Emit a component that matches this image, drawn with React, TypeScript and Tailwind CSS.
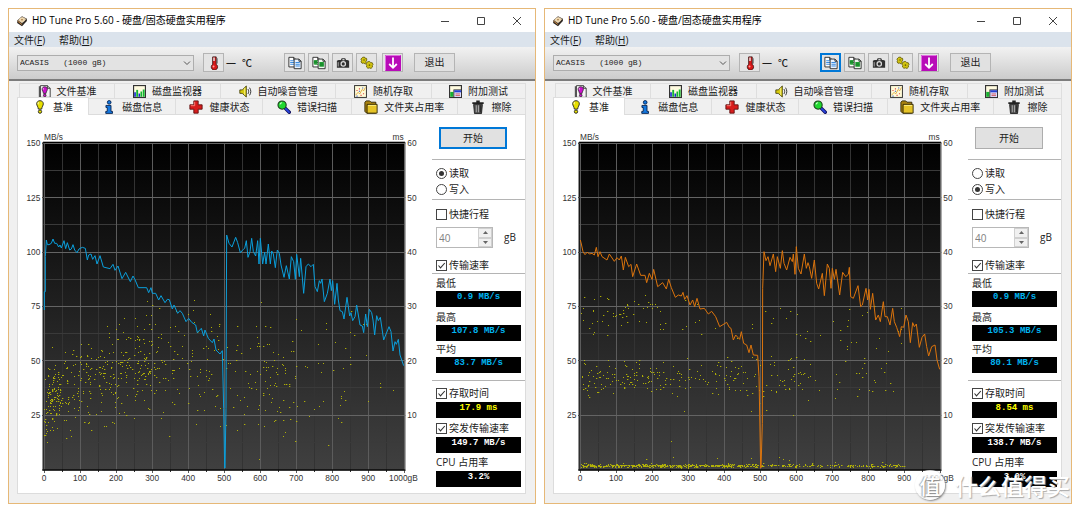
import { useId, type ReactNode } from "react";
import clsx from "clsx";

/* ---------- chart data (three units per pixel) ---------- */

const PLOT = { left: 102, right: 1183, top: 70, bottom: 1048 };

const READ_TRACE =
  "103,570 103,515 106,515 106,410 109,360 112,374 117,374 124,370 129,357 134,370 140,370 146,381 150,375 154,384 162,362 167,386 172,368 179,390 184,387 189,374 194,390 201,398 207,387 217,382 226,385 232,420 236,405 243,402 248,418 255,407 261,432 270,407 280,441 300,446 309,433 315,451 324,438 336,476 347,457 361,485 369,468 375,479 385,503 410,503 416,518 423,503 427,520 437,520 446,540 453,527 465,548 472,538 478,539 487,567 492,555 503,580 510,572 517,580 528,605 536,595 545,607 557,615 562,638 574,625 581,648 585,630 595,655 607,668 612,657 618,690 630,702 637,692 641,865 644,1044 645,1044 648,865 649,570 650,345 657,370 666,381 677,352 683,368 691,398 700,388 704,385 709,362 714,412 720,395 725,355 730,395 737,408 743,362 747,432 751,355 758,432 764,396 768,432 775,372 781,432 785,393 790,402 796,443 802,390 808,400 813,435 822,472 829,437 838,477 844,410 851,425 856,478 860,403 868,470 872,415 881,520 888,440 895,432 903,440 910,433 915,500 922,515 928,482 932,490 936,477 943,545 952,520 960,477 964,512 968,482 974,553 981,490 985,540 990,572 997,575 1002,597 1011,532 1019,588 1023,578 1028,602 1035,590 1040,555 1050,615 1057,618 1061,638 1067,582 1072,620 1078,568 1085,578 1089,600 1094,645 1100,587 1105,602 1111,592 1121,660 1137,620 1143,635 1149,693 1155,665 1159,673 1165,658 1170,705 1181,737";

const WRITE_TRACE =
  "103,360 106,372 111,395 117,404 124,396 130,402 138,400 145,405 151,382 156,410 162,395 168,410 183,420 190,402 205,424 213,413 220,420 226,408 232,450 238,412 248,440 255,433 260,470 272,432 284,466 297,466 302,488 310,460 318,478 323,448 335,500 350,488 361,507 368,478 376,503 388,532 397,525 406,528 411,517 416,538 423,527 432,555 440,540 446,560 453,535 462,567 475,565 487,582 497,574 509,590 521,620 534,612 542,607 550,622 555,625 562,660 569,645 581,658 586,635 593,670 602,675 609,698 615,675 622,705 635,706 639,770 644,1044 645,1044 649,910 650,505 654,395 660,422 666,410 672,437 682,402 689,455 694,410 703,445 709,392 714,430 722,450 732,412 739,425 742,402 747,463 751,380 757,445 765,462 775,402 781,445 786,428 790,440 797,475 805,420 812,490 818,507 829,460 835,527 844,432 850,445 855,505 859,445 865,478 870,448 881,525 890,457 899,470 907,463 910,442 914,530 922,535 936,497 944,560 949,555 960,505 965,540 969,508 973,568 980,520 989,600 997,585 1003,605 1012,545 1017,590 1024,590 1032,615 1040,565 1045,605 1052,622 1061,650 1066,620 1073,622 1080,585 1087,605 1093,668 1100,608 1105,620 1111,612 1120,682 1128,652 1136,642 1142,680 1148,708 1157,680 1167,675 1173,720 1181,748";

type Dot = [number, number];

function makeRandom(seed: number) {
  let s = seed;
  return () => {
    s = (s * 1664525 + 1013904223) % 4294967296;
    return s / 4294967296;
  };
}

function makeDots(seed: number, bands: { n: number; from: number; to: number; ms: (gb: number) => number; sd: number }[]): Dot[] {
  const rnd = makeRandom(seed);
  const dots: Dot[] = [];
  for (const b of bands) {
    for (let i = 0; i < b.n; i++) {
      const gb = b.from + rnd() * (b.to - b.from);
      const g = rnd() + rnd() + rnd() - 1.5;
      const ms = Math.max(0.3, b.ms(gb) + g * 2 * b.sd);
      dots.push([PLOT.left + gb * 1.081, PLOT.bottom - ms * 16.3]);
    }
  }
  return dots;
}

const READ_DOTS = makeDots(7, [
  { n: 75, from: 0, to: 50, ms: (g) => 10 + g / 12, sd: 3.2 },
  { n: 290, from: 10, to: 300, ms: (g) => 13.5 + g / 38, sd: 4 },
  { n: 125, from: 250, to: 500, ms: () => 19.5, sd: 5.5 },
  { n: 90, from: 500, to: 700, ms: () => 17, sd: 5.5 },
  { n: 50, from: 600, to: 900, ms: () => 18, sd: 6 },
  { n: 4, from: 850, to: 1000, ms: () => 14, sd: 5 },
]);

const WRITE_DOTS = makeDots(23, [
  { n: 130, from: 0, to: 300, ms: () => 17, sd: 1.6 },
  { n: 95, from: 300, to: 620, ms: () => 16.8, sd: 1.8 },
  { n: 28, from: 600, to: 870, ms: () => 16.5, sd: 2 },
  { n: 55, from: 0, to: 250, ms: () => 28.5, sd: 1.8 },
  { n: 50, from: 250, to: 900, ms: () => 26.5, sd: 3.5 },
  { n: 6, from: 150, to: 620, ms: () => 9.5, sd: 2 },
  { n: 420, from: 0, to: 500, ms: () => 0.7, sd: 0.15 },
  { n: 150, from: 500, to: 900, ms: () => 0.7, sd: 0.12 },
  { n: 26, from: 0, to: 850, ms: () => 1.4, sd: 0.6 },
]);

const snap = (v: number) => Math.floor(v / 3) * 3 + 1.5;

function Chart({ trace, dots, color }: { trace: string; dots: Dot[]; color: string }) {
  const fill = useId();
  const xs = Array.from({ length: 21 }, (_, i) => i);
  const ys = Array.from({ length: 13 }, (_, i) => i);
  return (
    <svg viewBox="24 -15 1236 1134" className="block h-auto w-full" role="img">
      <defs>
        <linearGradient id={fill} x1="0" y1="0" x2="0" y2="1">
          <stop offset="0" stopColor="#000" />
          <stop offset="1" stopColor="#404040" />
        </linearGradient>
      </defs>
      <rect x="99" y="63" width="1086" height="3" fill="#b5b5b5" />
      <rect x="99" y="66" width="1086" height="985" fill={`url(#${fill})`} />
      <g strokeWidth="3">
        {xs.filter((i) => i % 2).map((i) => (
          <path key={i} d={`M${snap(PLOT.left + i * 54.05)} 72V1056`} stroke="#333" />
        ))}
        {ys.filter((i) => i % 2).map((i) => (
          <path key={i} d={`M99 ${snap(PLOT.top + i * 81.5)}H1185`} stroke="#3a3a3a" />
        ))}
        {xs.filter((i) => i % 2 === 0).map((i) => (
          <path key={i} d={`M${snap(PLOT.left + i * 54.05)} 70V1059`} stroke="#5c5c5c" />
        ))}
        {ys.filter((i) => i % 2 === 0 && i < 12).map((i) => (
          <path key={i} d={`M96 ${snap(PLOT.top + i * 81.5)}H1188`} stroke="#646464" />
        ))}
        <path d="M97 1050H1187" stroke="#0a0a0a" strokeWidth="5" />
        <path d="M99 66V1051" stroke="#222" />
        <path d="M1186 66V1051" stroke="#999" />
      </g>
      <g fill="#c4c400" opacity="0.85">
        {dots.map(([x, y], i) => (
          <rect key={i} x={Math.round(x / 3) * 3} y={Math.round(y / 3) * 3} width={i % 3 ? 3 : 4} height="3" />
        ))}
      </g>
      <polyline points={trace} fill="none" stroke={color} strokeWidth="3" strokeLinejoin="round" />
      <g className="fill-[#333] font-['Liberation_Sans',Arial,sans-serif] text-[25px]">
        {[150, 125, 100, 75, 50, 25].map((v, i) => (
          <text key={v} x="91" y={79 + i * 163} textAnchor="end">{v}</text>
        ))}
        {[60, 50, 40, 30, 20, 10].map((v, i) => (
          <text key={v} x="1192" y={79 + i * 163}>{v}</text>
        ))}
        {[0, 100, 200, 300, 400, 500, 600, 700, 800, 900].map((v, i) => (
          <text key={v} x={102 + i * 108.1} y="1084" textAnchor="middle">{v}</text>
        ))}
        <text x="1137" y="1084">1000gB</text>
        <text x="102" y="60">MB/s</text>
        <text x="1181" y="60" textAnchor="end">ms</text>
      </g>
    </svg>
  );
}

/* ---------- icons ---------- */

function Icon({ children, className = "size-[14px]" }: { children: ReactNode; className?: string }) {
  return (
    <svg viewBox="0 0 16 16" className={clsx("shrink-0", className)} aria-hidden="true">
      {children}
    </svg>
  );
}

const AppIcon = () => (
  <Icon className="size-3">
    <path d="M2 7 8 1.5 14.5 5v3L8 15 1.5 10.5z" fill="#2b2520" />
    <path d="M2.5 7 8.2 2 14 5.2 8 11.3z" fill="#c9b79c" />
    <ellipse cx="8" cy="6.4" rx="3.8" ry="2.8" fill="#f0d9b0" />
    <circle cx="8" cy="6.3" r="1" fill="#8a5c28" />
    <path d="m2.2 8.2 5.6 4.5" stroke="#d98d3b" strokeWidth="1.2" />
  </Icon>
);

const Exclaim = ({ fill }: { fill: string }) => (
  <g stroke="#1a1a1a" strokeWidth="1">
    <path d="M8 .8c2.2 0 3.8 1.5 3.8 3.6 0 1.8-1.6 3.2-1.9 6H6.100c-.3-2.8-1.900-4.200-1.900-6C4.200 2.300 5.800.8 8 .8z" fill={fill} />
    <circle cx="8" cy="13.300" r="1.9" fill={fill} />
    <path d="M6.300 2.700c-.5.6-.6 1.400-.3 2.200" stroke="#fff" fill="none" />
  </g>
);

const BulbIcon = () => <Icon><Exclaim fill="#e8e000" /></Icon>;

const FileBenchIcon = () => (
  <Icon className="size-[13px]">
    <path d="M3 .8h8.500L15 4v11.200H3z" fill="#f4f4f4" stroke="#222" />
    <path d="M11.500.8V4H15" fill="#ccc" stroke="#222" />
    <path d="M1 1.500h2v13.500H1z" fill="#555" />
    <g transform="translate(1.500 1.500) scale(.85)"><Exclaim fill="#cc14cc" /></g>
  </Icon>
);

const MonitorIcon = () => (
  <Icon className="size-[13px]">
    <rect x=".7" y=".7" width="14.600" height="14.600" fill="#fffbe0" stroke="#333" strokeWidth="1.400" />
    <path d="M1.500 14.500V9h2v5.500z" fill="#1428d2" />
    <path d="M4 14.500V6h2.300v8.500z" fill="#12b830" />
    <path d="M6.800 14.500v-4h2v4z" fill="#1428d2" />
    <path d="M9.200 14.500V8h2v6.500zM12 14.500V5.500h2.300v9z" fill="#12b830" />
  </Icon>
);

const SpeakerIcon = () => (
  <Icon className="size-[13px]">
    <path d="M1 6h3l5-4.800v13.600L4 10.300H1z" fill="#d8cc10" stroke="#3a3600" strokeLinejoin="round" />
    <path d="M7 3.500v9" stroke="#fff79a" />
    <path d="M11 5c1.200 1.800 1.200 4.200 0 6M13 3.300c2 3 2 6.400 0 9.400" fill="none" stroke="#333" strokeWidth="1.200" />
  </Icon>
);

const RandomIcon = () => (
  <Icon className="size-[13px]">
    <rect x=".7" y=".7" width="14.600" height="14.600" fill="#fffbd8" stroke="#333" strokeWidth="1.200" />
    <path d="M2 12.500 5 9l2 2 3-5.500 2 1.500 2-4" fill="none" stroke="#d8a038" />
    <path d="M3 6h1.400v1.400H3zM6 4h1.400v1.400H6zM11 10h1.400v1.400H11zM8 12h1.400v1.400H8z" fill="#e04848" />
    <path d="M3 13h1.400v1.400H3zM10 3h1.400v1.400H10zM6 7h1.400v1.400H6z" fill="#3858c8" />
  </Icon>
);

const ExtraIcon = () => (
  <Icon className="size-[13px]">
    <rect x=".7" y=".7" width="14.600" height="14.600" fill="#fffbe0" stroke="#333" strokeWidth="1.400" />
    <path d="M1.500 14.500V8.500h4v6z" fill="#16b030" />
    <rect x="6" y="6" width="9.300" height="9.300" fill="#dcdcff" stroke="#222" />
    <path d="M6.500 6.500h8.500V9H6.500z" fill="#2440d0" />
    <path d="M8 11h5.500M8 13h5.500" stroke="#d04848" />
  </Icon>
);

const InfoIcon = () => (
  <Icon>
    <g fill="#1478e0" stroke="#06204a">
      <circle cx="8.200" cy="2.700" r="2.100" />
      <path d="M4.500 6.200h5.800v6.800h1.700v2.300H4.300V13H6V8.500H4.500z" />
    </g>
  </Icon>
);

const HealthIcon = () => (
  <Icon>
    <path d="M5.500 1h5v4.500H15v5h-4.500V15h-5v-4.500H1v-5h4.500z" fill="#d81c1c" stroke="#5c1010" />
    <path d="M6.500 2v4.500H2" fill="none" stroke="#ff8a80" />
  </Icon>
);

const SearchIcon = () => (
  <Icon>
    <path d="m9 9 5 5" stroke="#101060" strokeWidth="4" strokeLinecap="round" />
    <path d="m9.500 9.500 4.300 4.300" stroke="#2a46e0" strokeWidth="2" strokeLinecap="round" />
    <circle cx="5.800" cy="5.800" r="4.700" fill="#20d830" stroke="#1c3c1c" strokeWidth="1.200" />
    <path d="M3.500 5c.4-1.200 1.200-1.800 2.300-1.800" stroke="#d8ffd8" strokeWidth="1.300" fill="none" />
  </Icon>
);

const FolderIcon = () => (
  <Icon>
    <path d="M1 2.500 2.500 1h4L8 2.500h5.500V15H3L1 13z" fill="#a88210" stroke="#2c2204" />
    <path d="M3.500 5H15v10H3.500z" fill="#e6c428" stroke="#2c2204" />
    <path d="M4.600 6.200h9.200" stroke="#fff08a" />
  </Icon>
);

const TrashIcon = () => (
  <Icon>
    <path d="M1.500 3.500h13M6 1.500h4" stroke="#222" strokeWidth="2" />
    <path d="M3 5h10l-1 10.500H4z" fill="#4c4c4c" stroke="#1c1c1c" />
    <path d="M6 6v8M8.500 6v8" stroke="#b8b8b8" />
    <path d="M11 6v8" stroke="#222" />
  </Icon>
);

const ThermoIcon = () => (
  <Icon>
    <path d="M6.500 1h4v8.500a3.600 3.600 0 1 1-4 0z" fill="#d81818" stroke="#3c1414" />
    <path d="M7.200 1.600h1.600v4H7.200z" fill="#e8f4f4" />
    <path d="M11.500 2.500v6" stroke="#555" strokeWidth="1.200" />
    <circle cx="7.500" cy="12" r="1.100" fill="#ff9c9c" />
  </Icon>
);

const Page = ({ x, y, fill, line }: { x: number; y: number; fill: string; line: string }) => (
  <g transform={`translate(${x} ${y})`}>
    <path d="M.5.5h5.500L8.500 3v8.500h-8z" fill={fill} stroke="#222" />
    <path d="M6 .5V3h2.500" fill="none" stroke="#222" />
    <path d="M2 4.500h5M2 6.500h5M2 8.500h5" stroke={line} strokeWidth="1.200" />
  </g>
);

const CopyTextIcon = () => (
  <Icon>
    <Page x={0.5} y={1} fill="#fff" line="#3c8ce0" />
    <Page x={6.5} y={3} fill="#eaf4ff" line="#3c8ce0" />
  </Icon>
);

const CopyImageIcon = () => (
  <Icon>
    <Page x={0.5} y={1} fill="#fff" line="#28a838" />
    <path d="M2 5h4v4H2z" fill="#18902c" />
    <Page x={6.5} y={3} fill="#eef8ee" line="#28a838" />
    <path d="M8.500 7.500h5V12h-5z" fill="#18902c" />
  </Icon>
);

const CameraIcon = () => (
  <Icon>
    <path d="M1 5.500 3 4.500h2.500L6.500 2.500h4l1 2H13l2 1V13.500H1z" fill="#303030" />
    <path d="M7.300 3.500h2.400V5H7.300z" fill="#d8d8d8" />
    <circle cx="8.300" cy="9" r="3.200" fill="#ddd" />
    <circle cx="8.300" cy="9" r="1.800" fill="#303030" />
    <path d="M2.500 7v5" stroke="#bbb" />
  </Icon>
);

const GearsIcon = () => (
  <Icon>
    <g fill="#d2c410" stroke="#5c5400" strokeWidth=".9" strokeLinejoin="round">
      <path d="m3 1.500 2-.3.800 1.300 1.700.2.300 2-1 1.300.4 1.500-1.600 1.300-1.600-.7-1.700.2L1.200 6.700l.6-1.500L1 3.500z" />
      <path d="m9 6.500 2-.3 1.200 1.400 1.800.1.900 2-.9 1.300.3 1.600-1.700 1.600-1.700-.6-1.900.4-1.600-1.500.3-1.700-1-1.500 1-1.700z" />
    </g>
    <circle cx="4.600" cy="4.600" r=".9" fill="#6a6000" />
    <circle cx="10.800" cy="10.400" r="1" fill="#6a6000" />
  </Icon>
);

const DownIcon = () => (
  <Icon className="size-4">
    <rect width="16" height="16" fill="#b80cb8" />
    <path d="M.5 15.500V.5h15" fill="none" stroke="#e070e0" />
    <path d="M8 2.500v10M4.200 9 8 12.800 11.800 9" fill="none" stroke="#fff" strokeWidth="1.800" />
  </Icon>
);

/* ---------- controls ---------- */

function ToolButton({ label, children, focused }: { label: string; children: ReactNode; focused?: boolean }) {
  return (
    <button
      aria-label={label}
      className={clsx(
        "flex h-[19px] w-[21px] items-center justify-center bg-[#e4e4e4]",
        focused ? "border-2 border-[#0078d7]" : "border border-[#b4b4b4]",
      )}
    >
      {children}
    </button>
  );
}

function Tab({ icon, label, className }: { icon: ReactNode; label: string; className?: string }) {
  return (
    <button
      role="tab"
      className={clsx("flex items-center justify-center gap-[6px] border-t border-r border-[#dedede] leading-none whitespace-nowrap", className)}
    >
      {icon}
      {label}
    </button>
  );
}

function Check({ label, checked }: { label: string; checked?: boolean }) {
  return (
    <label className="ml-1 flex h-4 items-center gap-[2px] whitespace-nowrap">
      <span className="relative flex">
        <input type="checkbox" defaultChecked={checked} className="peer size-[11px] appearance-none border border-[#444] bg-white" />
        <svg viewBox="0 0 11 11" className="pointer-events-none absolute inset-0 hidden size-[11px] peer-checked:block" aria-hidden="true">
          <path d="m2.500 5.500 2 2.300L8.800 3" fill="none" stroke="#333" strokeWidth="1.100" />
        </svg>
      </span>
      {label}
    </label>
  );
}

function Radio({ label, name, checked }: { label: string; name: string; checked?: boolean }) {
  return (
    <label className="ml-1 flex h-4 items-center gap-[2px]">
      <span className="relative flex">
        <input type="radio" name={name} defaultChecked={checked} className="peer size-[11px] appearance-none rounded-full border border-[#444] bg-white" />
        <span className="pointer-events-none absolute inset-[3px] hidden rounded-full bg-[#333] peer-checked:block" />
      </span>
      {label}
    </label>
  );
}

function Readout({ value, className }: { value: string; className: string }) {
  return (
    <output className={clsx("mx-1 block h-4 bg-black text-center font-['Liberation_Mono','Courier_New',monospace] text-[9px] leading-3 font-bold", className)}>
      {value}
    </output>
  );
}

const Rule = ({ className }: { className?: string }) => <hr className={clsx("border-t border-[#b4b4b4]", className)} />;

/* ---------- window ---------- */

type Run = {
  mode: "read" | "write";
  min: string;
  max: string;
  avg: string;
  access: string;
  burst: string;
  cpu: string;
};

function Sidebar({ run }: { run: Run }) {
  const read = run.mode === "read";
  return (
    <div className="w-[95px] shrink-0 pt-3 pl-[2px]">
      <button
        className={clsx(
          "ml-[7px] flex h-[22px] w-[68px] items-center justify-center bg-[#e1e1e1]",
          read ? "border-2 border-[#0078d7]" : "border border-[#adadad]",
        )}
      >
        开始
      </button>
      <Rule className="mt-[10px] mb-[5px]" />
      <Radio name={run.mode} label="读取" checked={read} />
      <Radio name={run.mode} label="写入" checked={!read} />
      <Rule className="mt-[2px] mb-[6px]" />
      <Check label="快捷行程" />
      <div className="mt-[5px] ml-1 flex h-[21px] items-center">
        <div className="flex h-full w-[57px] border border-[#b8b8b8]">
          <input aria-label="快捷行程 gB" defaultValue="40" className="h-full w-0 flex-1 bg-white pl-[2px] text-[#808080] outline-none" />
          <div className="flex w-[14px] flex-col bg-[#e8e8e8]">
            <button aria-label="增加" className="flex flex-1 items-center justify-center border border-[#d0d0d0] bg-[#f0f0f0]">
              <svg viewBox="0 0 5 3" className="h-[3px] w-[5px]"><path d="M0 3 2.500 0 5 3z" fill="#666" /></svg>
            </button>
            <button aria-label="减少" className="flex flex-1 items-center justify-center border border-[#d0d0d0] bg-[#f0f0f0]">
              <svg viewBox="0 0 5 3" className="h-[3px] w-[5px]"><path d="m0 0 2.500 3L5 0z" fill="#666" /></svg>
            </button>
          </div>
        </div>
        <span className="ml-[11px]">gB</span>
      </div>
      <div className="mt-[9px]"><Check label="传输速率" checked /></div>
      <Rule className="mb-px" />
      <div className="ml-1 h-4 leading-4">最低</div>
      <Readout value={run.min} className="text-[#00b4f0]" />
      <div className="mt-[2px] ml-1 h-4 leading-4">最高</div>
      <Readout value={run.max} className="text-[#00b4f0]" />
      <div className="ml-1 h-4 leading-4">平均</div>
      <Readout value={run.avg} className="text-[#00b4f0]" />
      <Rule className="mt-[7px] mb-1" />
      <Check label="存取时间" checked />
      <Readout value={run.access} className="mt-px text-[#ffff00]" />
      <div className="mt-[2px]"><Check label="突发传输速率" checked /></div>
      <Readout value={run.burst} className="mt-px text-white" />
      <div className="mt-px ml-1 h-4 leading-4">CPU 占用率</div>
      <Readout value={run.cpu} className="mt-px text-white" />
    </div>
  );
}

function TuneWindow({ run }: { run: Run }) {
  const read = run.mode === "read";
  return (
    <section className="border border-[#e6b877] bg-[#f0f0f0] pb-[9px]">
      <header className="flex h-[23px] items-center bg-white pl-[7px] text-black">
        <AppIcon />
        <h1 className="ml-1 flex-1 whitespace-nowrap">HD Tune Pro 5.60 - 硬盘/固态硬盘实用程序</h1>
        {[
          ["最小化", "M1 5.500h8"],
          ["最大化", "M1.500 1.500h7v7h-7z"],
          ["关闭", "m1 1 8 8M9 1 1 9"],
        ].map(([label, d]) => (
          <button key={label} aria-label={label} className="flex h-full w-9 items-center justify-center">
            <svg viewBox="0 0 10 10" className="size-[10px]"><path d={d} fill="none" stroke="#444" /></svg>
          </button>
        ))}
      </header>

      <nav className="flex h-[15px] items-center gap-[14px] bg-[#dbe3ec] pl-[5px]">
        <button className="leading-none">文件(<u>F</u>)</button>
        <button className="leading-none">帮助(<u>H</u>)</button>
      </nav>

      <div className="flex h-[34px] items-center border-b-2 border-[#7c7c7c] bg-linear-to-b from-[#f2f2f2] to-[#cccccc] pb-px pl-2">
        <div className="relative">
          <select
            aria-label="驱动器"
            className="block h-4 w-[177px] appearance-none border border-[#adadad] bg-[#e3e3e3] pl-[2px] font-['Liberation_Mono','Courier_New',monospace] text-[8px] leading-none text-[#222]"
          >
            <option>{"ACASIS\u00a0\u00a0\u00a0(1000 gB)"}</option>
          </select>
          <svg viewBox="0 0 8 5" className="pointer-events-none absolute top-[6px] right-[3px] h-[5px] w-2" aria-hidden="true">
            <path d="m1 .5 3 3 3-3" fill="none" stroke="#555" />
          </svg>
        </div>
        <div className="ml-[9px] flex"><ToolButton label="温度"><ThermoIcon /></ToolButton></div>
        <div className="ml-[2px] flex w-[58px] items-center gap-[6px]">
          <span>—</span>
          <span className="font-['Noto_Sans_CJK_SC',sans-serif] leading-none font-medium">℃</span>
        </div>
        <div className="flex gap-[3px]">
          <ToolButton label="复制文本" focused={!read}><CopyTextIcon /></ToolButton>
          <ToolButton label="复制图像"><CopyImageIcon /></ToolButton>
          <ToolButton label="截图"><CameraIcon /></ToolButton>
          <ToolButton label="选项"><GearsIcon /></ToolButton>
        </div>
        <div className="ml-[5px] flex"><ToolButton label="保存"><DownIcon /></ToolButton></div>
        <button className="ml-[11px] flex h-[19px] w-[41px] items-center justify-center border border-[#b4b4b4] bg-[#e1e1e1]">退出</button>
      </div>

      <div role="tablist" className="mt-[2px] mr-[9px] ml-2">
        <div className="ml-[2px] grid h-[15px] grid-cols-[95fr_106fr_115fr_96fr_94fr] border-l border-[#dedede]">
          <Tab icon={<FileBenchIcon />} label="文件基准" />
          <Tab icon={<MonitorIcon />} label="磁盘监视器" />
          <Tab icon={<SpeakerIcon />} label="自动噪音管理" />
          <Tab icon={<RandomIcon />} label="随机存取" />
          <Tab icon={<ExtraIcon />} label="附加测试" />
        </div>
        <div className="grid h-4 grid-cols-[72fr_87fr_87fr_88fr_106fr_68fr]">
          <Tab icon={<BulbIcon />} label="基准" className="z-10 -mt-px -mb-px border-l bg-white" />
          <Tab icon={<InfoIcon />} label="磁盘信息" />
          <Tab icon={<HealthIcon />} label="健康状态" />
          <Tab icon={<SearchIcon />} label="错误扫描" />
          <Tab icon={<FolderIcon />} label="文件夹占用率" />
          <Tab icon={<TrashIcon />} label="擦除" />
        </div>
      </div>

      <div className="mr-[9px] ml-2 flex border border-[#dcdcdc] bg-white">
        <div className="min-w-0 flex-1">
          <Chart
            trace={read ? READ_TRACE : WRITE_TRACE}
            dots={read ? READ_DOTS : WRITE_DOTS}
            color={read ? "#0a9fdc" : "#dc740c"}
          />
        </div>
        <Sidebar run={run} />
      </div>
    </section>
  );
}

const RUNS: Run[] = [
  { mode: "read", min: "0.9 MB/s", max: "107.8 MB/s", avg: "83.7 MB/s", access: "17.9 ms", burst: "149.7 MB/s", cpu: "3.2%" },
  { mode: "write", min: "0.9 MB/s", max: "105.3 MB/s", avg: "80.1 MB/s", access: "8.54 ms", burst: "138.7 MB/s", cpu: "3.0%" },
];

export default function App() {
  return (
    <main className="relative grid grid-cols-2 items-start gap-2 bg-white p-2 font-['Open_Sans','Noto_Sans_CJK_SC',sans-serif] text-[10px] text-[#1c1c1c]">
      {RUNS.map((run) => (
        <TuneWindow key={run.mode} run={run} />
      ))}
      <div className="pointer-events-none absolute right-[10px] bottom-3 z-20 flex items-center gap-[10px] font-['Noto_Sans_CJK_SC',sans-serif] leading-none font-medium text-white [text-shadow:1px_1px_1px_#aaa]">
        <span className="flex size-[30px] items-center justify-center rounded-full bg-white/80 text-[21px] text-white shadow-[1px_1px_2px_#888] [text-shadow:1px_1px_1px_#888,-1px_0_1px_#aaa]">值</span>
        <span className="text-[23px]">什么值得买</span>
      </div>
    </main>
  );
}
